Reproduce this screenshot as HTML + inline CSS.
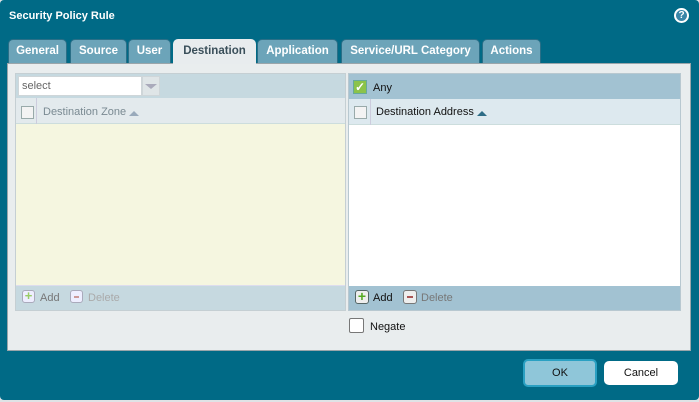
<!DOCTYPE html>
<html><head><style>
*{box-sizing:border-box;margin:0;padding:0}
body{width:699px;height:402px;background:#dfe3e6;font-family:"Liberation Sans",sans-serif;overflow:hidden;position:relative}
.dlg{position:absolute;left:0;top:0;width:699px;height:400px;background:#006a86;border-radius:4px}
.t{position:absolute;color:#fff;font-weight:bold;font-size:11px}
.tab{position:absolute;top:39px;height:24px;background:#6ca4b9;border:1px solid #2a6f87;border-bottom:none;border-radius:5px 5px 0 0;color:#fff;font-weight:bold;font-size:11.5px;text-align:center;line-height:22px}
.tab.a{background:#e8ecee;color:#3a4f5a;height:25px;border-color:#e8ecee}
.panel{position:absolute;left:7px;top:63px;width:684px;height:288px;background:#e9edee;border:1px solid #9aa5aa}
.abs{position:absolute}
.cb{position:absolute;width:13px;height:13px;background:#f3f3f3;border:1px solid #9aa;}
.txt{position:absolute;font-size:11px}
.btn{position:absolute;border-radius:5px;font-size:11px;text-align:center}
</style></head><body>
<div class="dlg">
<div class="t" style="left:9px;top:10px">Security Policy Rule</div>
<div class="abs" style="left:674px;top:8px;width:15px;height:15px;border-radius:50%;border:2px solid #fff;background:#3a86a8;color:#fff;font-size:10px;font-weight:bold;text-align:center;line-height:11px">?</div>
<div class="tab" style="left:8px;width:59px">General</div>
<div class="tab" style="left:70px;width:57px">Source</div>
<div class="tab" style="left:128px;width:43px">User</div>
<div class="tab" style="left:341px;width:139px">Service/URL Category</div>
<div class="tab" style="left:482px;width:59px">Actions</div>
<div class="tab" style="left:257px;width:81px">Application</div>
<div class="panel"></div>
<div class="tab a" style="left:173px;width:83px">Destination</div>

<!-- left -->
<div class="abs" style="left:15px;top:73px;width:331px;height:238px;border:1px solid #c5cfd3;background:#f5f6e0"></div>
<div class="abs" style="left:16px;top:74px;width:329px;height:24px;background:#c6d9e0"></div>
<div class="abs" style="left:18px;top:76px;width:124px;height:20px;background:#fff;border:1px solid #cfd6d9"></div>
<div class="txt" style="left:22px;top:80px;color:#666">select</div>
<div class="abs" style="left:142px;top:76px;width:18px;height:20px;background:#dfe5e7;border:1px solid #cfd6d9"></div>
<div class="abs" style="left:145px;top:84px;width:0;height:0;border-left:6px solid transparent;border-right:6px solid transparent;border-top:5px solid #aab"></div>
<div class="abs" style="left:16px;top:98px;width:329px;height:26px;background:#e3eaed;border-bottom:1px solid #cdd"></div>
<div class="abs" style="left:36px;top:98px;width:1px;height:26px;background:#ccd"></div>
<div class="cb" style="left:21px;top:106px"></div>
<div class="txt" style="left:43px;top:106px;color:#7a8a92">Destination Zone</div>
<div class="abs" style="left:129px;top:111px;border-left:5px solid transparent;border-right:5px solid transparent;border-bottom:5px solid #9ab"></div>
<div class="abs" style="left:16px;top:285px;width:329px;height:25px;background:#c6d9e0;border-top:1px solid #dde"></div>
<div class="abs" style="left:22px;top:290px;width:13px;height:13px;border:1px solid #aab;border-radius:3px;background:#eef;color:#9c6;font-weight:bold;font-size:13px;line-height:10px;text-align:center">+</div>
<div class="txt" style="left:40px;top:292px;color:#777">Add</div>
<div class="abs" style="left:70px;top:290px;width:13px;height:13px;border:1px solid #aab;border-radius:3px;background:#eef"><div class="abs" style="left:3px;top:5px;width:5px;height:2px;background:#c99"></div></div>
<div class="txt" style="left:88px;top:292px;color:#aaa">Delete</div>

<!-- right -->
<div class="abs" style="left:348px;top:73px;width:333px;height:238px;border:1px solid #b8c8d0;background:#fff"></div>
<div class="abs" style="left:349px;top:74px;width:331px;height:25px;background:#a2c2d2"></div>
<div class="abs" style="left:353px;top:80px;width:14px;height:14px;background:#8bc34a;border:1px solid #6a9;color:#fff;font-size:12px;font-weight:bold;line-height:12px;text-align:center">✓</div>
<div class="txt" style="left:373px;top:82px;color:#111">Any</div>
<div class="abs" style="left:349px;top:99px;width:331px;height:26px;background:#dde9ef;border-bottom:1px solid #cdd"></div>
<div class="abs" style="left:370px;top:99px;width:1px;height:26px;background:#ccd"></div>
<div class="cb" style="left:354px;top:106px"></div>
<div class="txt" style="left:376px;top:106px;color:#111">Destination Address</div>
<div class="abs" style="left:477px;top:111px;border-left:5px solid transparent;border-right:5px solid transparent;border-bottom:5px solid #2d6c86"></div>
<div class="abs" style="left:349px;top:286px;width:331px;height:24px;background:#a2c2d2"></div>
<div class="abs" style="left:355px;top:290px;width:14px;height:14px;border:1px solid #566;border-radius:3px;background:#eee;color:#5a2;font-weight:bold;font-size:14px;line-height:11px;text-align:center">+</div>
<div class="txt" style="left:373px;top:292px;color:#111">Add</div>
<div class="abs" style="left:403px;top:290px;width:14px;height:14px;border:1px solid #777;border-radius:3px;background:#eee"><div class="abs" style="left:3px;top:5px;width:6px;height:2px;background:#a55"></div></div>
<div class="txt" style="left:421px;top:292px;color:#777">Delete</div>
<div class="abs" style="left:349px;top:318px;width:15px;height:15px;background:#fff;border:1px solid #777;border-radius:2px"></div>
<div class="txt" style="left:370px;top:321px;color:#111">Negate</div>

<div class="btn" style="left:523px;top:359px;width:74px;height:28px;background:#8fc6d9;border:2px solid #2aa0c2;line-height:24px;color:#111">OK</div>
<div class="btn" style="left:604px;top:361px;width:74px;height:24px;background:#fff;line-height:24px;color:#111">Cancel</div>
</div>
</body></html>
